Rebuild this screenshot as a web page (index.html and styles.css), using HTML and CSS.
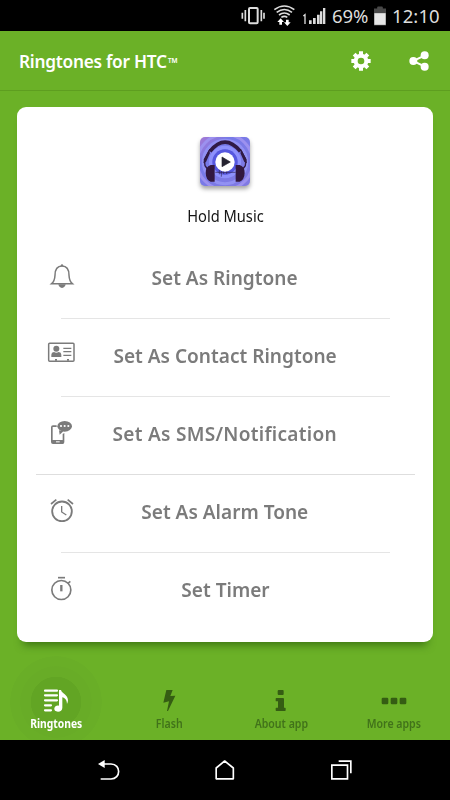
FILE: index.html
```html
<!DOCTYPE html>
<html lang="en">
<head>
<meta charset="utf-8">
<title>Ringtones for HTC</title>
<link rel="stylesheet" href="styles.css">
</head>
<body>
<div class="status">
  <svg class="indicators" viewBox="0 0 288 93" fill="none" stroke="#ddd">
    <rect x="39" y="24" width="26" height="46" rx="3" stroke-width="6"/>
    <path d="M28 30v34M76 30v34M19 38v18M84 38v18" stroke-width="5"/>
    <g stroke-width="5"><path d="M115 29q30-22 60 0M122 37q23-17 46 0M129 45q16-12 32 0M136 52q9-6 18 0"/></g>
    <path d="M134 55l10 11h-6v8h-8v-8h-6zM154 78l10-11h-6v-8h-8v8h-6z" fill="#fff" stroke="none"/>
    <path d="M202 48l5-4v28" stroke-width="4"/>
    <path d="M219 61h8v11h-8zM231 54h8v18h-8zM243 44h8v28h-8zM252 34h7v38h-7zM261 24h7v48h-7z" fill="#ddd" stroke="none"/>
  </svg>
  <span class="percent">69%</span>
  <svg class="battery" viewBox="0 0 38 60"><path d="M10 3q0-3 3-3h12q3 0 3 3v3h10v54H0V6h10z" fill="#484848"/><path d="M1 21h36v37H1z" fill="#e6e6e6"/></svg>
  <span class="clock">12:10</span>
</div>
<header class="header">
  <h1><span class="title">Ringtones for HTC<span class="tm">™</span></span></h1>
  <svg class="gear" viewBox="0 0 60 60"><g fill="none" stroke="#fff"><circle cx="30" cy="30" r="16" stroke-width="12"/><path d="M30 1v11M30 48v11M1 30h11M48 30h11M9.500 9.500l8 8M42.500 42.500l8 8M50.500 9.500l-8 8M17.500 42.500l-8 8" stroke-width="12"/></g></svg>
  <svg class="share" viewBox="0 0 60 60" fill="#fff"><path d="M48 13L12 30l36 17" fill="none" stroke="#fff" stroke-width="6"/><circle cx="13" cy="30" r="12"/><circle cx="47" cy="13" r="12"/><circle cx="47" cy="47" r="12"/></svg>
</header>
<main class="main">
  <section class="card">
    <div class="track">
      <svg class="cover" viewBox="0 0 150 150">
        <defs>
          <linearGradient id="bg" x1="0" y1="0" x2="1" y2="1"><stop offset="0" stop-color="#a579d4"/><stop offset=".3" stop-color="#777ae8"/><stop offset="1" stop-color="#8179e2"/></linearGradient>
          <clipPath id="tile"><rect width="150" height="147" rx="15"/></clipPath>
        </defs>
        <g clip-path="url(#tile)">
          <path fill="url(#bg)" d="M0 0h150v150H0z"/>
          <g fill="none"><circle cx="75" cy="75" r="83" stroke="#9c91ef" stroke-width="9"/><circle cx="75" cy="75" r="65" stroke="#9291f3" stroke-width="9"/><circle cx="75" cy="75" r="43" stroke="#8e91fc" stroke-width="11"/></g>
          <circle cx="75" cy="75" r="38" fill="#5658df"/>
          <path d="M30 43Q75-12 121 43" fill="none" stroke="#301a45" stroke-width="11"/>
          <path d="M30 37L13 68l2 18 12 16M121 37l17 31-2 18-12 16" fill="none" stroke="#301a45" stroke-width="4"/>
          <path d="M26 40L14 63l-4 16 8-4 12-27zM125 40l12 23 4 16-8-4-12-27z" fill="#301a45"/>
          <path d="M44 84v50H32q-14-5-15-25t15-25zM107 84v50h12q14-5 15-25t-15-25z" fill="#32183f"/>
          <path d="M46 106h61M58 98v14M64 101v18M71 96v15M80 99v12" stroke="#302451" stroke-width="2"/>
        </g>
        <circle cx="75" cy="75" r="29" fill="#fff"/><path d="M66 60v29l25-14z" fill="#252330" stroke="#252330" stroke-width="2"/>
      </svg>
      <div class="track-name">Hold Music</div>
    </div>
    <ul class="actions">
      <li class="action">
        <svg viewBox="0 0 90 90" fill="none" stroke="#7b7b7b" stroke-width="4.500"><path d="M14 68q9-7 10-25c0-19 8-28 21-28s21 9 21 28q1 18 10 25z"/><circle cx="45" cy="13" r="3.500" fill="#7b7b7b" stroke="none"/><path d="M34 70h22q-2 10-11 11-9-1-11-11z" fill="#7b7b7b" stroke="none"/></svg>
        <span>Set As Ringtone</span>
      </li>
      <li class="action">
        <svg viewBox="0 0 90 90" fill="#7b7b7b"><rect x="5" y="13" width="76" height="54" rx="3" fill="none" stroke="#7b7b7b" stroke-width="4.500"/><circle cx="28" cy="29" r="9"/><path d="M13 54v-7q0-7 8-8 7 4 14 0 8 1 8 8v7zM24 60h6v5h-6zM60 60h6v5h-6z"/><path d="M49 28h24M49 38h24M49 49h24" stroke="#7b7b7b" stroke-width="4"/></svg>
        <span>Set As Contact Ringtone</span>
      </li>
      <li class="action wide-rule">
        <svg viewBox="0 0 90 90" fill="#7b7b7b"><path d="M29 25H18q-6 0-6 6v44q0 6 6 6h29q5 0 5-6V48l-5 3v18H17V30h12z"/><path d="M36 40l2 13 11-10z"/><ellipse cx="53" cy="28" rx="22" ry="16"/><g fill="#fff"><circle cx="42" cy="27" r="3.200"/><circle cx="53" cy="27" r="3.200"/><circle cx="64" cy="27" r="3.200"/><path d="M27 73h11v3H27z"/></g></svg>
        <span>Set As SMS/Notification</span>
      </li>
      <li class="action">
        <svg viewBox="0 0 90 90" fill="none" stroke="#7b7b7b"><circle cx="45" cy="49" r="29.500" stroke-width="5.500"/><path d="M44 33v18l14 9" stroke-width="4"/><path d="M12 27l16-13M62 14l16 13" stroke-width="5"/></svg>
        <span>Set As Alarm Tone</span>
      </li>
      <li class="action">
        <svg viewBox="0 0 90 90" fill="none" stroke="#7b7b7b"><circle cx="43" cy="51" r="28.500" stroke-width="5"/><path d="M33 14h21" stroke-width="5"/><path d="M43 36v19" stroke-width="7"/><path d="M62 32l8-7" stroke-width="5"/></svg>
        <span>Set Timer</span>
      </li>
    </ul>
  </section>
</main>
<nav class="tabs">
  <a class="tab active">
    <svg viewBox="0 0 90 90" fill="#fff"><path d="M12 14h36M12 28h36M12 43h36M12 58h18M12 73h18" fill="none" stroke="#fff" stroke-width="6.500" stroke-linecap="round"/><path d="M54 12h6c2 10 21 14 21 31q0 5-3 11c0-13-7-18-14-20v31c0 8-6 12-13 12-8 0-12-4-11-10 1-7 8-10 14-8z"/></svg>
    <span>Ringtones</span>
  </a>
  <a class="tab">
    <svg viewBox="0 0 90 90"><path d="M37 12h19l-7 18 15-1-22 46h-3l6-29-17 4z"/></svg>
    <span>Flash</span>
  </a>
  <a class="tab">
    <svg viewBox="0 0 90 90"><rect x="35" y="12" width="18" height="15" rx="3"/><path d="M31 36h20q3 0 3 3v26h3q2 0 2 2v6q0 2-2 2H31q-2 0-2-2v-6q0-2 2-2h5V46h-5q-2 0-2-2v-6q0-2 2-2z"/></svg>
    <span>About app</span>
  </a>
  <a class="tab">
    <svg viewBox="0 0 90 90"><rect x="8" y="35" width="20" height="20" rx="4"/><rect x="35" y="35" width="20" height="20" rx="4"/><rect x="62" y="35" width="20" height="20" rx="4"/></svg>
    <span>More apps</span>
  </a>
</nav>
<footer class="system">
  <svg viewBox="0 0 90 90" fill="none" stroke="#fff" stroke-width="5"><path d="M27 27h24c31 0 30 45 0 45H20"/><path d="M12 27l20-12v24z" fill="#fff" stroke="none"/></svg>
  <svg viewBox="0 0 90 90" fill="none" stroke="#fff" stroke-width="5"><path d="M18.500 71.500V39L44 18l26 21v32.500z" stroke-linejoin="round"/></svg>
  <svg viewBox="0 0 90 90" fill="none" stroke="#fff" stroke-width="5"><path d="M17.500 30.500h47v41h-47z"/><path d="M38 18.500h36.500V55"/></svg>
</footer>
</body>
</html>
```

FILE: styles.css
```css
* { box-sizing: border-box; }
body { margin: 0; width: 450px; height: 800px; overflow: hidden; display: flex; flex-direction: column; background: #6bb127; font-family: "Noto Sans", sans-serif; }
svg { display: block; flex: none; }
.status { height: 31px; background: #000; color: #ddd; display: flex; align-items: center; padding-left: 236px; font-size: 18.5px; line-height: 31px; white-space: nowrap; }
.indicators { width: 96px; height: 31px; }
.percent { width: 42px; letter-spacing: -.1px; }
.battery { width: 12px; height: 20px; margin-right: 6px; }
.clock { letter-spacing: .1px; }
.header { height: 60px; border-bottom: 1px solid #5e9e20; display: flex; align-items: center; padding: 0 21px 0 19px; }
h1 { margin: 0; flex: 1; color: #fff; font-size: 18.5px; line-height: 24px; font-weight: 600; letter-spacing: -.3px; white-space: nowrap; }
.title { display: inline-block; transform: scaleX(.935) translateY(1px); transform-origin: left; }
.tm { font-size: 14px; margin-left: 1px; }
.gear { width: 20px; height: 20px; margin-right: 38px; }
.share { width: 20px; height: 20px; }
.main { padding: 16px 17px 0; height: 564px; }
.card { height: 535px; background: #fff; border-radius: 9px; box-shadow: 0 9px 9px -6px rgba(20, 65, 0, .55); }
.track { height: 133px; padding-top: 30px; display: flex; flex-direction: column; align-items: center; }
.cover { width: 50px; height: 50px; filter: drop-shadow(0 3px 2px rgba(0, 0, 0, .35)); }
.track-name { margin-top: 18px; font-size: 15.5px; line-height: 22px; color: #151515; transform: scaleX(.945); }
.actions { list-style: none; margin: 0; padding: 0; }
.action { height: 78px; display: grid; grid-template-columns: 60px 1fr 60px; }
.action + .action { background: linear-gradient(#e5e5e5, #e5e5e5) 44px 0 / 329px 1px no-repeat; }
.action.wide-rule + .action { background: linear-gradient(#dedede, #dedede) 19px 0 / 379px 1px no-repeat; }
.action svg { width: 30px; height: 30px; margin: 21px 0 0 30px; }
.action span { justify-self: center; margin-top: 22px; font-size: 20.5px; line-height: 30px; font-weight: 600; color: #7b7b7b; white-space: nowrap; transform: scaleX(.93); }
.action.wide-rule span { letter-spacing: .3px; }
.tabs { height: 85px; display: grid; grid-template-columns: repeat(4, 1fr); overflow: hidden; }
.tab { display: flex; flex-direction: column; align-items: center; padding-top: 31px; fill: #355d13; color: #41721a; font-size: 12px; line-height: 16px; font-weight: 600; white-space: nowrap; }
.tab svg { width: 30px; height: 30px; }
.tab span { transform: scaleX(.88); }
.tab.active { color: #fff; font-weight: 700; background: radial-gradient(circle at 56px 47px, #62a524 25px, #68ac27 25.5px 35.5px, #69ae27 36px 45.5px, transparent 46px); }
.tab.active span { transform: scaleX(.86); }
.system { height: 60px; background: #000; display: flex; gap: 86px; padding: 15px 0 0 94px; }
.system svg { width: 30px; height: 30px; }
```
